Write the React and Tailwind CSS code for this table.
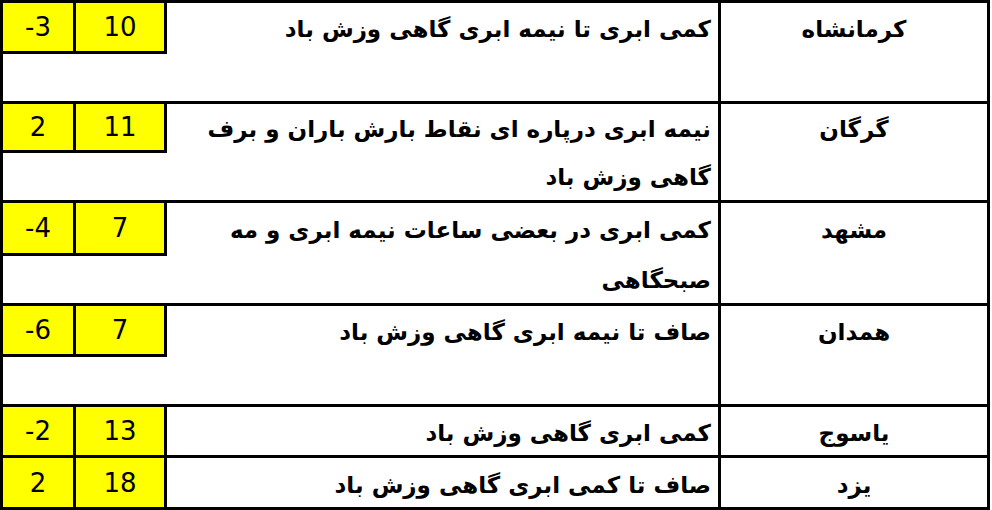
import React from 'react';

// forecast rows: min / max temp, description lines, city
const rows = [
  { min: '-3', max: '10', city: 'کرمانشاه', lines: ['کمی ابری تا نیمه ابری گاهی وزش باد'], top: 'h-[48px]', bottom: 'h-[47px]' },
  { min: '2', max: '11', city: 'گرگان', lines: ['نیمه ابری درپاره ای نقاط بارش باران و برف', 'گاهی وزش باد'], top: 'h-[46px]', bottom: 'h-[47px]' },
  { min: '-4', max: '7', city: 'مشهد', lines: ['کمی ابری در بعضی ساعات نیمه ابری و مه', 'صبحگاهی'], top: 'h-[50px]', bottom: 'h-[47px]' },
  { min: '-6', max: '7', city: 'همدان', lines: ['صاف تا نیمه ابری گاهی وزش باد'], top: 'h-[48px]', bottom: 'h-[47px]' },
  { min: '-2', max: '13', city: 'یاسوج', lines: ['کمی ابری گاهی وزش باد'], top: 'h-[48px]' },
  { min: '2', max: '18', city: 'یزد', lines: ['صاف تا کمی ابری گاهی وزش باد'], top: 'h-[49px]' },
];

const fa = "font-['DejaVu_Sans',sans-serif] font-bold text-[23px] text-black whitespace-nowrap";
const num = "font-['DejaVu_Sans',sans-serif] text-[26px] text-black leading-none";

function Row({ r }) {
  return (
    <div className="flex border-b-[3px] border-black">
      {/* temps */}
      <div className="w-[164px] flex flex-col shrink-0">
        <div className={`flex ${r.top}`}>
          <div className={`w-[73px] h-full bg-[#ffff00] border-r-[3px] border-black flex items-center justify-center ${num}`}>{r.min}</div>
          <div className={`w-[91px] h-full bg-[#ffff00] border-r-[3px] border-black flex items-center justify-center ${num}`}>{r.max}</div>
        </div>
        {r.bottom && (
          <>
            <div className="h-[3px] bg-black" />
            <div className={r.bottom} />
          </>
        )}
      </div>

      {/* description */}
      <div className="w-[554px] shrink-0 border-r-[3px] border-black flex flex-col pr-[7px]" dir="rtl">
        <div className={`${r.top} pt-[5px] flex items-center ${fa}`}>{r.lines[0]}</div>
        {r.bottom && (
          <div className={`${r.bottom} mt-[3px] pt-[2px] flex items-center ${fa}`}>{r.lines[1] || ''}</div>
        )}
      </div>

      {/* city */}
      <div className="w-[266px] shrink-0 flex flex-col" dir="rtl">
        <div className={`${r.top} pt-[5px] flex items-center justify-center ${fa}`}>{r.city}</div>
      </div>
    </div>
  );
}

export default function App() {
  return (
    <div className="w-[992px] h-[510px] bg-white overflow-hidden">
      <div className="w-[990px] border-t-[3px] border-l-[3px] border-r-[3px] border-black">
        {rows.map((r, i) => (
          <Row key={i} r={r} />
        ))}
      </div>
    </div>
  );
}
